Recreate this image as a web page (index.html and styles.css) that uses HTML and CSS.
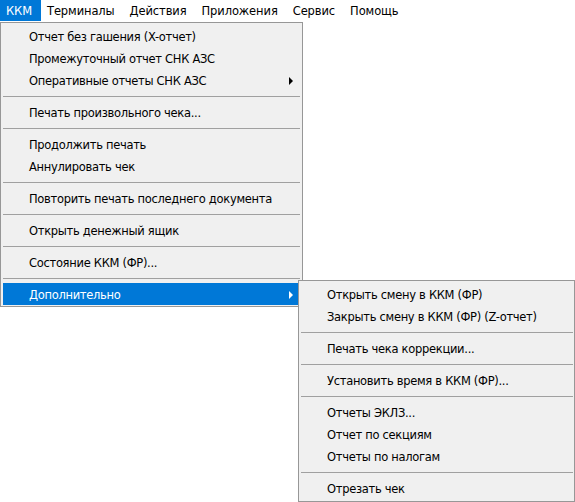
FILE: index.html
```html
<!DOCTYPE html>
<html lang="ru">
<head>
<meta charset="utf-8">
<title>ККМ</title>
<link rel="stylesheet" href="styles.css">
</head>
<body>
<div class="app">
  <nav class="menubar">
    <div class="bar-item active">ККМ</div>
    <div class="bar-item">Терминалы</div>
    <div class="bar-item">Действия</div>
    <div class="bar-item">Приложения</div>
    <div class="bar-item">Сервис</div>
    <div class="bar-item">Помощь</div>
  </nav>

  <div class="menu main-menu">
    <div class="item">Отчет без гашения (X-отчет)</div>
    <div class="item">Промежуточный отчет СНК АЗС</div>
    <div class="item has-sub">Оперативные отчеты СНК АЗС<span class="arrow"></span></div>
    <div class="sep"></div>
    <div class="item">Печать произвольного чека...</div>
    <div class="sep"></div>
    <div class="item">Продолжить печать</div>
    <div class="item">Аннулировать чек</div>
    <div class="sep"></div>
    <div class="item">Повторить печать последнего документа</div>
    <div class="sep"></div>
    <div class="item">Открыть денежный ящик</div>
    <div class="sep"></div>
    <div class="item">Состояние ККМ (ФР)...</div>
    <div class="sep"></div>
    <div class="item has-sub selected">Дополнительно<span class="arrow"></span></div>
  </div>

  <div class="menu sub-menu">
    <div class="item">Открыть смену в ККМ (ФР)</div>
    <div class="item">Закрыть смену в ККМ (ФР) (Z-отчет)</div>
    <div class="sep"></div>
    <div class="item">Печать чека коррекции...</div>
    <div class="sep"></div>
    <div class="item">Установить время в ККМ (ФР)...</div>
    <div class="sep"></div>
    <div class="item">Отчеты ЭКЛЗ...</div>
    <div class="item">Отчет по секциям</div>
    <div class="item">Отчеты по налогам</div>
    <div class="sep"></div>
    <div class="item">Отрезать чек</div>
  </div>
</div>
</body>
</html>
```

FILE: styles.css
```css
html, body {
  margin: 0;
  padding: 0;
  background: #ffffff;
}

body {
  font-family: "DejaVu Sans", Tahoma, sans-serif;
  font-size: 11.5px;
  letter-spacing: -0.3px;
  color: #000000;
}

.app {
  position: relative;
  width: 575px;
  height: 502px;
  overflow: hidden;
}

.menubar {
  display: flex;
  height: 22px;
  background: #ffffff;
  letter-spacing: -0.1px;
}

.bar-item {
  height: 21px;
  line-height: 22px;
  padding: 0 8px 0 6px;
  margin-right: 1px;
}

.bar-item.active {
  background: #0078d7;
  color: #ffffff;
  padding-right: 9px;
  margin-right: 0;
}

.menu {
  position: absolute;
  background: #f0f0f0;
  border: 1px solid #979797;
  box-sizing: border-box;
}

.main-menu {
  left: 0;
  top: 22px;
  width: 303px;
  padding: 2px 4px 1px 2px;
}

.sub-menu {
  left: 298px;
  top: 280px;
  width: 277px;
  height: 222px;
  padding: 2px 3px 1px 2px;
  box-shadow: 1px 1px 0 rgba(0, 0, 0, 0.08);
}

.item {
  position: relative;
  height: 21px;
  padding-top: 1px;
  line-height: 22px;
  padding-left: 26px;
  white-space: nowrap;
}

.item.selected {
  background: #0078d7;
  color: #ffffff;
}

.arrow {
  position: absolute;
  right: 5px;
  top: 8px;
  width: 0;
  height: 0;
  border-top: 4px solid transparent;
  border-bottom: 4px solid transparent;
  border-left: 4px solid #000000;
}

.item.selected .arrow {
  border-left-color: #ffffff;
}

.sep {
  height: 10px;
  display: flex;
  align-items: center;
  margin: 0 -2px 0 0;
}

.sep::before {
  content: "";
  display: block;
  width: 100%;
  height: 1px;
  background: #a0a0a0;
}
```
